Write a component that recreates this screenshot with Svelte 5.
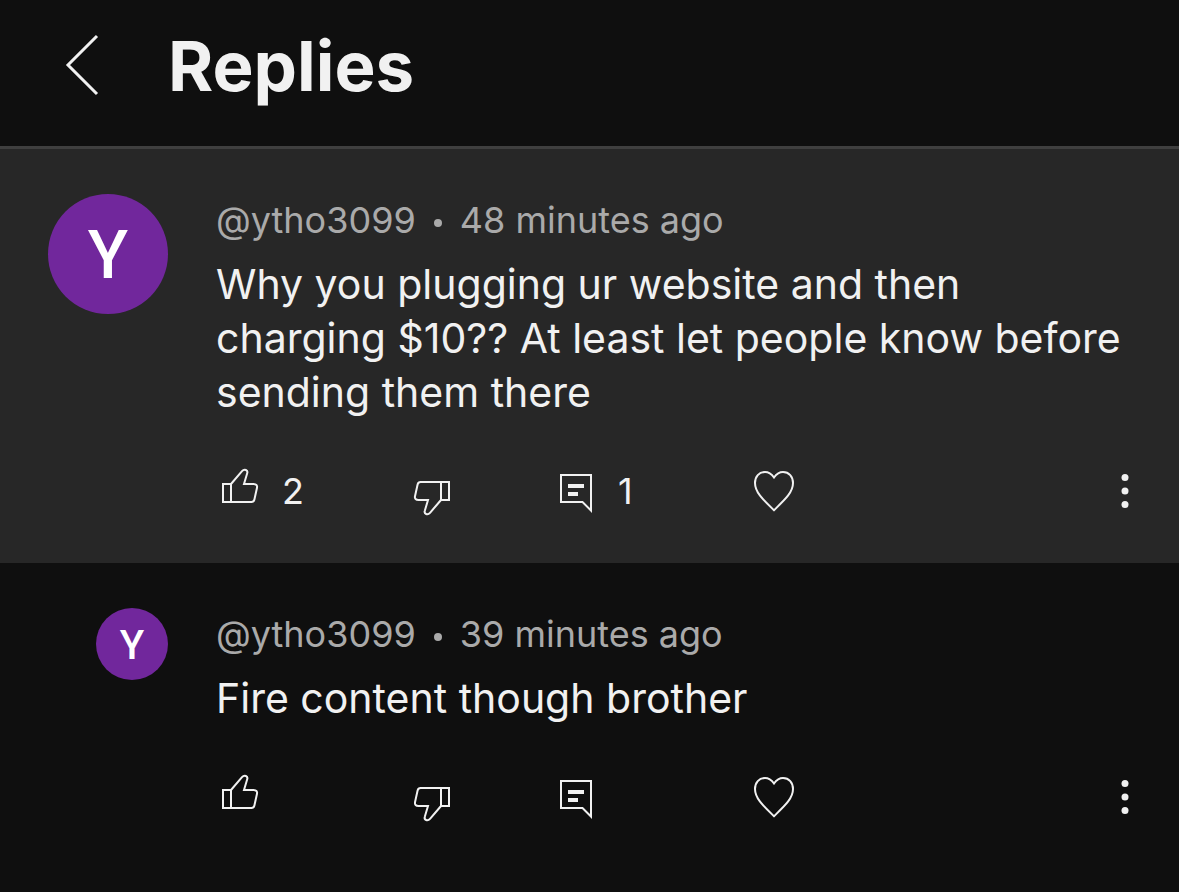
<script lang="ts">
	interface Comment {
		id: number;
		handle: string;
		age: string;
		text: string;
		likes?: number;
		replies?: number;
		isReply: boolean;
	}

	const comments: Comment[] = [
		{
			id: 1,
			handle: '@ytho3099',
			age: '48 minutes ago',
			text: 'Why you plugging ur website and then charging $10?? At least let people know before sending them there',
			likes: 2,
			replies: 1,
			isReply: false
		},
		{
			id: 2,
			handle: '@ytho3099',
			age: '39 minutes ago',
			text: 'Fire content though brother',
			isReply: true
		}
	];

	// Shared by like and dislike, which is the same hand turned around
	const thumbPath =
		'M15 22H7v18h8zM15 22 26 9.2c2.5-2.8 6.2-1 5.2 2L28 22h9.500c2.600 0 4 1.400 3.500 3.700L38.400 37.500c-.4 1.700-1.400 2.500-3 2.500H15';
</script>

<main class="replies-panel">
	<header class="panel-header">
		<button class="icon-btn back-btn" aria-label="Back">
			<svg width="36" height="64" viewBox="0 0 36 64">
				<path d="M33 2 4 31l29 29" />
			</svg>
		</button>
		<h1>Replies</h1>
	</header>

	{#each comments as comment (comment.id)}
		<article class="comment" class:reply={comment.isReply}>
			<div class="avatar-column">
				<div class="avatar">{comment.handle.charAt(1).toUpperCase()}</div>
			</div>

			<div class="comment-main">
				<div class="meta">
					<span>{comment.handle}</span>
					<span class="dot"></span>
					<span>{comment.age}</span>
				</div>

				<p class="comment-text">{comment.text}</p>

				<div class="actions">
					<button class="icon-btn" aria-label="Like">
						<svg width="48" height="60" viewBox="0 0 48 60">
							<path d={thumbPath} />
						</svg>
						{#if comment.likes}<span>{comment.likes}</span>{/if}
					</button>
					<button class="icon-btn" aria-label="Dislike">
						<svg width="48" height="60" viewBox="0 0 48 60">
							<path transform="rotate(180 24 30)" d={thumbPath} />
						</svg>
					</button>
					<button class="icon-btn" aria-label="Reply">
						<svg width="48" height="60" viewBox="0 0 48 60">
							<path d="M9 13h30v35.500L30.500 40H9z" />
							<path class="solid" d="M16 22h16v4H16zM16 30h10v4H16z" />
						</svg>
						{#if comment.replies}<span>{comment.replies}</span>{/if}
					</button>
					<button class="icon-btn" aria-label="Heart">
						<svg width="48" height="60" viewBox="0 0 48 60">
							<path d="M24 15.500C21.500 12 18.500 10 15 10 9 10 5 14.500 5 21c0 9.500 8.500 17 19 27.200C34.500 38 43 30.500 43 21c0-6.500-4-11-10-11-3.500 0-6.500 2-9 5.500z" />
						</svg>
					</button>
					<button class="icon-btn" aria-label="More options">
						<svg width="12" height="60" viewBox="0 0 12 60">
							<circle class="solid" cx="6" cy="15.500" r="3.500" />
							<circle class="solid" cx="6" cy="29" r="3.500" />
							<circle class="solid" cx="6" cy="42.500" r="3.500" />
						</svg>
					</button>
				</div>
			</div>
		</article>
	{/each}
</main>

<style>
	:global(body) {
		margin: 0;
		background: #0f0f0f;
	}

	.replies-panel {
		font-family: Inter, 'Liberation Sans', sans-serif;
		color: #f1f1f1;
	}

	/* Header */
	.panel-header {
		display: flex;
		align-items: center;
		gap: 68px;
		padding: 22px 48px 36px 64px;
		border-bottom: 3px solid #3f3f3f;
	}

	h1 {
		margin: 0;
		font-size: 69px;
		line-height: 88px;
		font-weight: 700;
	}

	.icon-btn {
		display: flex;
		align-items: center;
		padding: 0;
		border: none;
		background: none;
		color: inherit;
		font: inherit;
		cursor: pointer;
	}

	svg {
		display: block;
		flex-shrink: 0;
		fill: none;
		stroke: currentColor;
		stroke-width: 2;
	}

	.back-btn svg {
		stroke-width: 3;
	}

	.solid {
		fill: currentColor;
		stroke: none;
	}

	/* Comments */
	.comment {
		display: flex;
		gap: 48px;
		padding: 45px 48px 41px;
		background: #272727;
	}

	.comment.reply {
		background: none;
	}

	.avatar-column {
		display: flex;
		justify-content: flex-end;
		align-items: flex-start;
		flex: 0 0 120px;
	}

	.avatar {
		display: flex;
		align-items: center;
		justify-content: center;
		box-sizing: border-box;
		width: 120px;
		height: 120px;
		padding-top: 3px;
		border-radius: 50%;
		background: #71279c;
		color: #fff;
		font-family: Roboto, sans-serif;
		font-size: 66px;
		font-weight: 500;
	}

	.reply .avatar {
		width: 72px;
		height: 72px;
		font-size: 40px;
	}

	.comment-main {
		flex: 1;
		min-width: 0;
		padding-top: 4px;
	}

	.meta {
		display: flex;
		align-items: center;
		gap: 18px;
		font-size: 36px;
		line-height: 44px;
		color: #aaa;
	}

	.dot {
		width: 8px;
		height: 8px;
		margin-top: 6px;
		border-radius: 50%;
		background: currentColor;
	}

	.comment-text {
		margin: 15px 0 43px;
		font-size: 41px;
		line-height: 54px;
	}

	.actions {
		display: grid;
		grid-template-columns: 192px 144px 198px 1fr auto;
		font-size: 36px;
	}

	.actions .icon-btn {
		gap: 18px;
	}

	.actions span {
		padding-bottom: 2px;
	}
</style>
